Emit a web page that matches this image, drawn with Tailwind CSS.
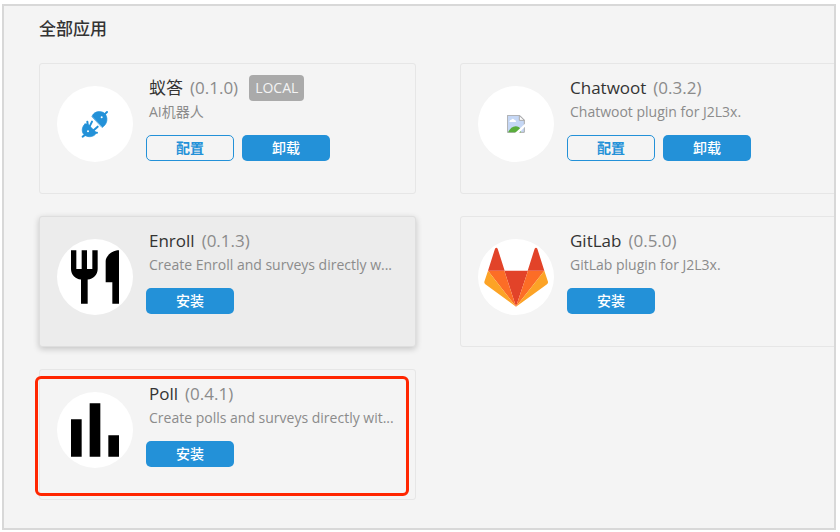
<!DOCTYPE html>
<html lang="zh-CN">
<head>
<meta charset="utf-8">
<meta name="viewport" content="width=device-width, initial-scale=1">
<title>全部应用</title>
<script src="https://cdn.jsdelivr.net/npm/@tailwindcss/browser@4"></script>
</head>
<body class="h-screen bg-white pt-1 pr-1 pb-0.5 pl-0.5 font-['Open_Sans','Noto_Sans_CJK_SC',sans-serif]">
<main class="h-full overflow-hidden border-2 border-[#d8d8d8] bg-[#f4f4f4] px-[35px] pt-[11px]">
  <h1 class="text-[17px] leading-6 font-medium text-[#333]">全部应用</h1>
  <div class="mt-[22px] grid grid-cols-[377px_377px] gap-x-11 gap-y-[22px]">

    <article class="flex h-[131px] gap-[13px] rounded-[3px] border border-[#e6e6e6] px-[17px] pt-3">
      <div class="mt-2.5 flex size-[76px] shrink-0 items-center justify-center rounded-full bg-white">
        <svg class="size-[76px]" viewBox="0 0 228 228" fill="#2391d8" stroke="#2391d8" stroke-linecap="round" aria-hidden="true">
          <path d="M105 91C109 79 124 73 138 79C152 86 154 107 142 119L136 124Z" stroke-width="2" stroke-linejoin="round"/>
          <path d="M142 86L150 78M84 147L77 152" stroke-width="6"/>
          <path d="M84 114L92 114L116 138L116 144C106 156 89 153 81 146C73 138 74 122 84 114Z" stroke-width="2" stroke-linejoin="round"/>
          <path d="M92 115L91 107M98 121L105 107M110 133L122 122M112 140L120 140" stroke-width="6"/>
          <circle cx="134" cy="94" r="3" fill="#fff" stroke="none"/><circle cx="93" cy="136" r="3" fill="#fff" stroke="none"/>
        </svg>
      </div>
      <div class="min-w-0 flex-1">
        <h2 class="flex h-6 items-center gap-[7px] pl-[3px] text-[17px] leading-6 text-[#333]">蚁答 <span class="text-[#8b8b8b]">(0.1.0)</span><span class="ml-1 rounded bg-[#aaa] px-1.5 text-[14px] leading-[26px] font-medium text-[#f4f4f4]">LOCAL</span></h2>
        <p class="truncate pt-px pl-[3px] text-[14px] leading-[22px] text-[#8b8b8b]">AI机器人</p>
        <div class="mt-3 flex gap-2">
          <button class="h-[26px] w-[88px] rounded-[5px] border border-[#2391d8] pb-px text-[14px] font-bold text-[#2391d8]">配置</button>
          <button class="h-[26px] w-[88px] rounded-[5px] bg-[#2391d8] pb-px text-[14px] font-medium text-white">卸载</button>
        </div>
      </div>
    </article>

    <article class="flex h-[131px] gap-[13px] rounded-[3px] border border-[#e6e6e6] px-[17px] pt-3">
      <div class="mt-2.5 flex size-[76px] shrink-0 items-center justify-center rounded-full bg-white">
        <svg class="size-[18px]" viewBox="0 0 54 54" aria-hidden="true">
          <path d="M1 1H38L52 15V52H1Z" fill="#c5d7f5" stroke="#aaa" stroke-width="3"/>
          <path d="M37 2V16H52Z" fill="#fff" stroke="#aaa" stroke-width="3"/>
          <path d="M7 21Q8 14 13 14Q17 8 22 14Q28 15 27 21Z" fill="#fff"/>
          <path d="M3 52Q12 34 26 34Q36 34 42 44V52Z" fill="#5aad3c"/>
          <path d="M24 54L54 26V35L36 54Z" fill="#fff"/>
        </svg>
      </div>
      <div class="min-w-0 flex-1">
        <h2 class="flex h-6 items-center gap-[7px] pl-[3px] text-[17px] leading-6 text-[#333]">Chatwoot <span class="text-[#8b8b8b]">(0.3.2)</span></h2>
        <p class="truncate pt-px pl-[3px] text-[14px] leading-[22px] text-[#8b8b8b]">Chatwoot plugin for J2L3x.</p>
        <div class="mt-3 flex gap-2">
          <button class="h-[26px] w-[88px] rounded-[5px] border border-[#2391d8] pb-px text-[14px] font-bold text-[#2391d8]">配置</button>
          <button class="h-[26px] w-[88px] rounded-[5px] bg-[#2391d8] pb-px text-[14px] font-medium text-white">卸载</button>
        </div>
      </div>
    </article>

    <article class="flex h-[131px] gap-[13px] rounded-[3px] border border-[#dedede] bg-[#ececec] px-[17px] pt-3 shadow-[0_2px_6px_rgba(0,0,0,0.2)]">
      <div class="mt-2.5 flex size-[76px] shrink-0 items-center justify-center rounded-full bg-white">
        <svg class="size-16" viewBox="0 0 24 24" aria-hidden="true"><path d="M11 9H9V2H7v7H5V2H3v7c0 2.12 1.66 3.84 3.75 3.97V22h2.5v-9.03C11.34 12.84 13 11.12 13 9V2h-2v7zm5-3v8h2.5v8H21V2c-2.76 0-5 2.24-5 4z"/></svg>
      </div>
      <div class="min-w-0 flex-1">
        <h2 class="flex h-6 items-center gap-[7px] pl-[3px] text-[17px] leading-6 text-[#333]">Enroll <span class="text-[#8b8b8b]">(0.1.3)</span></h2>
        <p class="truncate pt-px pl-[3px] text-[14px] leading-[22px] text-[#8b8b8b]">Create Enroll and surveys directly w...</p>
        <div class="mt-3 flex gap-2">
          <button class="h-[26px] w-[88px] rounded-[5px] bg-[#2391d8] pb-px text-[14px] font-medium text-white">安装</button>
        </div>
      </div>
    </article>

    <article class="flex h-[131px] gap-[13px] rounded-[3px] border border-[#e6e6e6] px-[17px] pt-3">
      <div class="mt-2.5 flex size-[76px] shrink-0 items-center justify-center rounded-full bg-white">
        <svg class="size-[76px]" viewBox="0 0 228 228" aria-hidden="true">
          <path d="M114 203L79 95H150Z" fill="#e24329"/>
          <path d="M114 203L79 95H30ZM114 203L150 95H199Z" fill="#fc6d26"/>
          <path d="M30 95L19 128Q18 133 22 136L114 203ZM199 95L210 128Q211 133 207 136L114 203Z" fill="#fca326"/>
          <path d="M30 95L51 29Q55 24 59 29L80 95ZM199 95L178 29Q174 24 170 29L149 95Z" fill="#e24329"/>
        </svg>
      </div>
      <div class="min-w-0 flex-1">
        <h2 class="flex h-6 items-center gap-[7px] pl-[3px] text-[17px] leading-6 text-[#333]">GitLab <span class="text-[#8b8b8b]">(0.5.0)</span></h2>
        <p class="truncate pt-px pl-[3px] text-[14px] leading-[22px] text-[#8b8b8b]">GitLab plugin for J2L3x.</p>
        <div class="mt-3 flex gap-2">
          <button class="h-[26px] w-[88px] rounded-[5px] bg-[#2391d8] pb-px text-[14px] font-medium text-white">安装</button>
        </div>
      </div>
    </article>

    <article class="relative flex h-[131px] gap-[13px] rounded-[3px] border border-[#e6e6e6] px-[17px] pt-3">
      <div class="mt-2.5 flex size-[76px] shrink-0 items-center justify-center rounded-full bg-white">
        <svg class="size-16" viewBox="0 0 24 24" aria-hidden="true"><path d="M3 8h4v14H3zM10 2h4v20h-4zM17 14h4v8h-4z"/></svg>
      </div>
      <div class="min-w-0 flex-1">
        <h2 class="flex h-6 items-center gap-[7px] pl-[3px] text-[17px] leading-6 text-[#333]">Poll <span class="text-[#8b8b8b]">(0.4.1)</span></h2>
        <p class="truncate pt-px pl-[3px] text-[14px] leading-[22px] text-[#8b8b8b]">Create polls and surveys directly wit...</p>
        <div class="mt-3 flex gap-2">
          <button class="h-[26px] w-[88px] rounded-[5px] bg-[#2391d8] pb-px text-[14px] font-medium text-white">安装</button>
        </div>
      </div>
      <!-- highlight marker over the card -->
      <div class="pointer-events-none absolute top-1.5 right-1.5 bottom-[3px] -left-[5px] rounded-md border-3 border-[#ff2600]"></div>
    </article>
  </div>
</main>
</body>
</html>
